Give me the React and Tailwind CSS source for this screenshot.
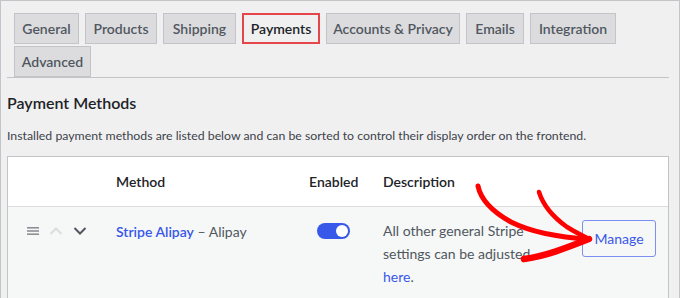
import React from 'react';

const tabsRow1 = [
    { label: 'General', w: 'w-[65px]' },
    { label: 'Products', w: 'w-[72px]' },
    { label: 'Shipping', w: 'w-[73px]' },
    { label: 'Payments', w: 'w-[78px]', active: true },
    { label: 'Accounts & Privacy', w: 'w-[134px]' },
    { label: 'Emails', w: 'w-[58px]' },
    { label: 'Integration', w: 'w-[86px]' },
];

const Tab = ({ label, w, active }) => (
    <div
        className={
            active
                ? `${w} h-[31px] flex items-center justify-center whitespace-nowrap bg-[#f0f0f1] border-2 border-[#e4464b] text-[#1d2327] text-[14px] font-semibold`
                : `${w} h-[31px] flex items-center justify-center whitespace-nowrap bg-[#dcdcde] border border-[#c3c4c7] text-[#50575e] text-[14px] font-semibold`
        }
    >
        {label}
    </div>
);

const Arrow = () => (
    <svg className="absolute left-0 top-0 pointer-events-none" width="680" height="298" viewBox="0 0 680 298">
        <g fill="none" stroke="#ff0000" strokeLinecap="round" strokeLinejoin="round">
            <path d="M477 185 C480 200, 492 211, 510 221 C528 230, 552 236, 588 238" strokeWidth="5" />
            <path d="M538 191 C542 204, 552 216, 566 226 C574 231, 582 235, 588 238" strokeWidth="4.5" />
            <path d="M523 258 C545 255, 565 247, 588 238" strokeWidth="6.5" />
        </g>
    </svg>
);

const App = () => {
    return (
        <div
            className="relative w-[680px] h-[298px] overflow-hidden bg-[#f0f0f1] border-t border-l border-r border-[#c3c4c7] pl-[6px] pr-[10px]"
            style={{ fontFamily: 'Lato, "Noto Sans", sans-serif' }}
        >
            <div className="border-b border-[#c3c4c7] pt-[12px] pl-[7px]">
                <div className="flex gap-[6px]">
                    {tabsRow1.map((t) => (
                        <Tab key={t.label} {...t} />
                    ))}
                </div>
                <div className="flex mt-[2px]">
                    <Tab label="Advanced" w="w-[77px]" />
                </div>
            </div>

            <h2 className="mt-[13px] text-[16px] font-semibold text-[#1d2327] leading-[24px]">Payment Methods</h2>
            <p className="mt-[12px] text-[12.3px] text-[#3c434a] leading-[18px]">
                Installed payment methods are listed below and can be sorted to control their display order on the frontend.
            </p>

            <div className="mt-[11px] border border-[#c3c4c7]">
                <div className="h-[50px] bg-white border-b border-[#dcdcde] flex items-center text-[14px] font-semibold text-[#1d2327]">
                    <div className="w-[108px]" />
                    <div className="w-[193px]">Method</div>
                    <div className="w-[74px]">Enabled</div>
                    <div>Description</div>
                </div>
                <div className="h-[100px] bg-[#f6f7f7] flex items-start pt-[12px]">
                    <div className="w-[108px] flex items-center gap-[10px] pl-[19px] h-[24px]">
                        <svg width="12" height="10" viewBox="0 0 12 10">
                            <rect x="0" y="1" width="12" height="1.6" fill="#8c8f94" />
                            <rect x="0" y="4.2" width="12" height="1.6" fill="#8c8f94" />
                            <rect x="0" y="7.4" width="12" height="1.6" fill="#8c8f94" />
                        </svg>
                        <svg width="14" height="10" viewBox="0 0 14 10">
                            <path d="M1.5 8 L7 2.5 L12.5 8" fill="none" stroke="#dcdcde" strokeWidth="2" />
                        </svg>
                        <svg width="14" height="10" viewBox="0 0 14 10">
                            <path d="M1.5 2 L7 7.5 L12.5 2" fill="none" stroke="#50575e" strokeWidth="2" />
                        </svg>
                    </div>
                    <div className="w-[193px] h-[24px] flex items-center text-[14px]">
                        <span className="font-semibold text-[#3858e9]">Stripe Alipay</span>
                        <span className="text-[#50575e]">&nbsp;– Alipay</span>
                    </div>
                    <div className="w-[74px] h-[24px] flex items-center">
                        <div className="ml-[8px] w-[33px] h-[16px] rounded-full bg-[#3858e9] flex items-center justify-end pr-[2px]">
                            <div className="w-[12px] h-[12px] rounded-full bg-white" />
                        </div>
                    </div>
                    <div className="w-[199px] pr-[38px] text-[14px] leading-[23px] text-[#50575e]">
                        All other general Stripe settings can be adjusted <span className="text-[#3858e9]">here</span>.
                    </div>
                    <div className="mt-[1px]">
                        <button className="w-[74px] h-[37px] border border-[#7b8ff0] rounded-[3px] bg-[#f6f7f7] text-[14px] text-[#3858e9]">
                            Manage
                        </button>
                    </div>
                </div>
            </div>
            <Arrow />
        </div>
    );
};

export default App;
